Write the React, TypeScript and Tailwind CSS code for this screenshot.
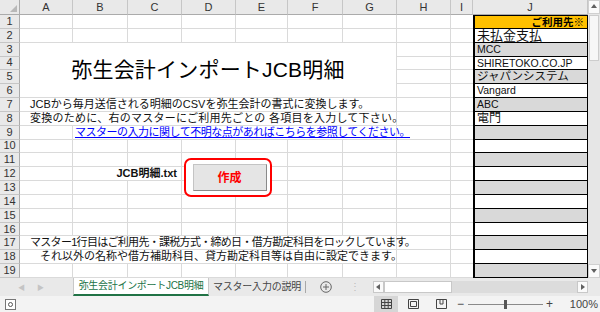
import type { ReactNode } from "react";

type Cell = { span?: string; cls?: string; content?: ReactNode };

const colLetters = ["A", "B", "C", "D", "E", "F", "G", "H", "I", "J"];

const plain = (n: number): Cell[] => Array.from({ length: n }, () => ({}));

const title = (
  <span className="text-[21px] text-black tracking-[0.2px]">弥生会計インポートJCB明細</span>
);

const mainRows: Cell[][] = [
  plain(9),
  plain(9),
  [{ span: "col-span-7 row-span-4", cls: "justify-center", content: title }, {}, {}],
  [{}, {}],
  [{}, {}],
  [{}, {}],
  [
    { span: "col-span-7", cls: "pl-[10px]", content: "JCBから毎月送信される明細のCSVを弥生会計の書式に変換します。" },
    {},
    {},
  ],
  [
    {
      span: "col-span-7",
      cls: "pl-[10px] tracking-[0.25px]",
      content: "変換のために、右のマスターにご利用先ごとの 各項目を入力して下さい。",
    },
    {},
    {},
  ],
  [
    {},
    {
      span: "col-span-6",
      cls: "pl-[2px] tracking-[-0.5px]",
      content: <span className="text-[#0000ff] underline underline-offset-1">マスターの入力に関して不明な点があればこちらを参照してください。</span>,
    },
    {},
    {},
  ],
  plain(9),
  plain(9),
  [{}, { span: "col-span-2", cls: "justify-end pr-[4px] font-bold text-[11.5px]", content: "JCB明細.txt" }, ...plain(6)],
  plain(9),
  plain(9),
  plain(9),
  plain(9),
  [
    {
      span: "col-span-7",
      cls: "pl-[10px] tracking-[-0.7px]",
      content: "マスター1行目はご利用先・課税方式・締め日・借方勘定科目をロックしています。",
    },
    {},
    {},
  ],
  [
    { span: "col-span-7", cls: "pl-[20px]", content: "それ以外の名称や借方補助科目、貸方勘定科目等は自由に設定できます。" },
    {},
    {},
  ],
  plain(9),
];

const masterRows: ReactNode[] = [
  "",
  <span className="text-[13px]">未払金支払</span>,
  "MCC",
  "SHIRETOKO.CO.JP",
  <span className="text-[11.5px]">ジャパンシステム</span>,
  "Vangard",
  "ABC",
  <span className="text-[12px]">電門</span>,
];

function ScrollArrow({ dir }: { dir: "up" | "down" | "left" | "right" }) {
  const pts = {
    up: "1,5 4,1 7,5",
    down: "1,2 4,6 7,2",
    left: "5,1 1,4 5,7",
    right: "2,1 6,4 2,7",
  }[dir];
  return (
    <svg width="8" height="8" viewBox="0 0 8 8">
      <polygon points={pts} fill="#606060" />
    </svg>
  );
}

export default function App() {
  return (
    <div className="w-[600px] h-[312px] overflow-hidden bg-white font-['Liberation_Sans','Noto_Sans_CJK_JP',sans-serif] text-[11px] leading-none text-[#222]">
      <div className="flex h-[278px]">
        <div className="relative w-[588px]">
          <div className="grid h-[278px] grid-cols-[20px_53px_55px_54px_54px_52px_55px_54px_54px_22px_115px] grid-rows-[15px_repeat(19,minmax(0,1fr))]">
            {/* header row */}
            <div className="flex items-end justify-end border-r border-b border-[#ababab] bg-[#e9e9e9] p-[2px]">
              <svg width="7" height="7" viewBox="0 0 7 7">
                <polygon points="7,0 7,7 0,7" fill="#b8b8b8" />
              </svg>
            </div>
            {colLetters.map((c) => (
              <div
                key={c}
                className="flex items-center justify-center border-r border-b border-[#c6c6c6] border-b-[#ababab] bg-[#e9e9e9] text-[11px] text-[#333]"
              >
                {c}
              </div>
            ))}

            {mainRows.map((cells, r) => (
              <Row key={r} r={r} cells={cells} />
            ))}
          </div>

          {/* 作成 button shape */}
          <div className="absolute left-[184px] top-[158px] flex h-[39px] w-[88px] items-center justify-center rounded-[7px] border-2 border-[#ff0000] bg-white pl-[3px]">
            <div className="flex h-[27px] w-[74px] items-center justify-center border border-[#c4c4c4] border-r-[#8a8a8a] border-b-[#8a8a8a] bg-[#e5e5e5] text-[12px] font-bold text-[#ff0000]">
              作成
            </div>
          </div>
        </div>

        {/* vertical scrollbar */}
        <div className="flex w-[12px] flex-col bg-[#e6e6e6]">
          <div className="flex h-[14px] items-center justify-center border border-[#d0d0d0] bg-[#fafafa]">
            <ScrollArrow dir="up" />
          </div>
          <div className="mx-[1px] mt-[1px] h-[46px] border border-[#cdcdcd] bg-[#f7f7f7]" />
          <div className="flex-1" />
          <div className="flex h-[14px] items-center justify-center border border-[#d0d0d0] bg-[#fafafa]">
            <ScrollArrow dir="down" />
          </div>
        </div>
      </div>

      {/* sheet tabs */}
      <div className="flex h-[18px] items-stretch whitespace-nowrap bg-[#e9e9e9] text-[10px]">
        <div className="flex w-[73px] shrink-0 items-center gap-[12px] pl-[18px] text-[#c4c4c4]">
          <span className="text-[7px]">◀</span>
          <span className="text-[7px]">▶</span>
        </div>
        <div className="flex w-[136px] shrink-0 items-center justify-center border-x border-[#c8c8c8] border-b-2 border-b-[#217346] bg-white tracking-[-0.3px] text-[#217346]">
          弥生会計インポートJCB明細
        </div>
        <div className="flex w-[96px] shrink-0 items-center justify-center tracking-[-0.2px] text-[#444]">
          マスター入力の説明
        </div>
        <div className="my-[3px] w-px shrink-0 bg-[#a8a8a8]" />
        <div className="flex w-[60px] shrink-0 items-center justify-center gap-[18px] pl-[8px]">
          <svg width="12" height="12" viewBox="0 0 12 12">
            <circle cx="6" cy="6" r="5.3" fill="none" stroke="#666" strokeWidth="1" />
            <path d="M6 3v6M3 6h6" stroke="#666" strokeWidth="1" />
          </svg>
          <span className="text-[10px] text-[#bbb]">⋮</span>
        </div>
        <div className="ml-[7px] flex w-[215px] shrink-0 items-center">
          <div className="flex h-[12px] w-full items-stretch bg-[#dcdcdc]">
            <div className="flex w-[11px] items-center justify-center border border-[#c8c8c8] bg-[#fafafa]">
              <ScrollArrow dir="left" />
            </div>
            <div className="w-[68px] border border-[#c8c8c8] bg-white" />
            <div className="flex-1" />
            <div className="flex w-[11px] items-center justify-center border border-[#c8c8c8] bg-[#fafafa]">
              <ScrollArrow dir="right" />
            </div>
          </div>
        </div>
      </div>

      {/* status bar */}
      <div className="flex h-[16px] items-center bg-[#f3f3f3] text-[11px] text-[#444]">
        <div className="ml-[5px] flex h-[11px] w-[11px] items-center justify-center border border-[#777] bg-white">
          <div className="h-[5px] w-[5px] rounded-full border border-[#555]" />
        </div>
        <div className="ml-[358px] flex h-[16px] w-[24px] items-center justify-center bg-[#d6d6d6]">
          <svg width="11" height="10" viewBox="0 0 11 10">
            <path d="M0.5 0.5h10v9h-10zM0.5 3.5h10M0.5 6.5h10M3.8 0.5v9M7.2 0.5v9" fill="none" stroke="#444" strokeWidth="1" />
          </svg>
        </div>
        <div className="ml-[9px] flex w-[12px] items-center justify-center">
          <svg width="11" height="10" viewBox="0 0 11 10">
            <path d="M0.5 0.5h10v9h-10zM2.5 2.5h6v5h-6z" fill="none" stroke="#444" strokeWidth="1" />
          </svg>
        </div>
        <div className="ml-[16px] flex w-[12px] items-center justify-center">
          <svg width="11" height="10" viewBox="0 0 11 10">
            <path d="M0.5 0.5h10v9h-10zM4 0.5v4.5h3v-4.5" fill="none" stroke="#444" strokeWidth="1" />
          </svg>
        </div>
        <span className="ml-[10px] text-[12px]">−</span>
        <div className="relative ml-[4px] h-px w-[75px] bg-[#8a8a8a]">
          <div className="absolute left-[36px] top-[-4px] h-[9px] w-[3px] bg-[#555]" />
        </div>
        <span className="ml-[3px] text-[12px]">+</span>
        <span className="ml-auto mr-[2px]">100%</span>
      </div>
    </div>
  );
}

function Row({ r, cells }: { r: number; cells: Cell[] }) {
  const n = r + 1;
  const isLastMain = (i: number) => i === cells.length - 1;
  let jCls = "bg-white";
  let jContent: ReactNode = masterRows[r] ?? "";
  if (n === 1) {
    jCls = "bg-[#ffc000] justify-end pr-[3px] font-bold text-black border-t border-t-black";
    jContent = "ご利用先※";
  } else if (n % 2 === 1) {
    jCls = "bg-[#d9d9d9]";
  }
  return (
    <>
      <div className="flex items-center justify-center border-r border-b border-[#c6c6c6] border-r-[#ababab] bg-[#e9e9e9] text-[11px] text-[#333]">
        {n}
      </div>
      {cells.map((c, i) => (
        <div
          key={i}
          className={`flex min-w-0 items-center whitespace-nowrap border-b border-[#dadada] text-[11px] text-[#111] ${
            isLastMain(i) ? "" : "border-r"
          } ${c.span ?? ""} ${c.cls ?? ""}`}
        >
          {c.content}
        </div>
      ))}
      <div
        className={`flex min-w-0 items-center overflow-hidden whitespace-nowrap border-l-2 border-r border-b border-black pl-[2px] text-[10.5px] text-[#111] ${jCls}`}
      >
        {jContent}
      </div>
    </>
  );
}
